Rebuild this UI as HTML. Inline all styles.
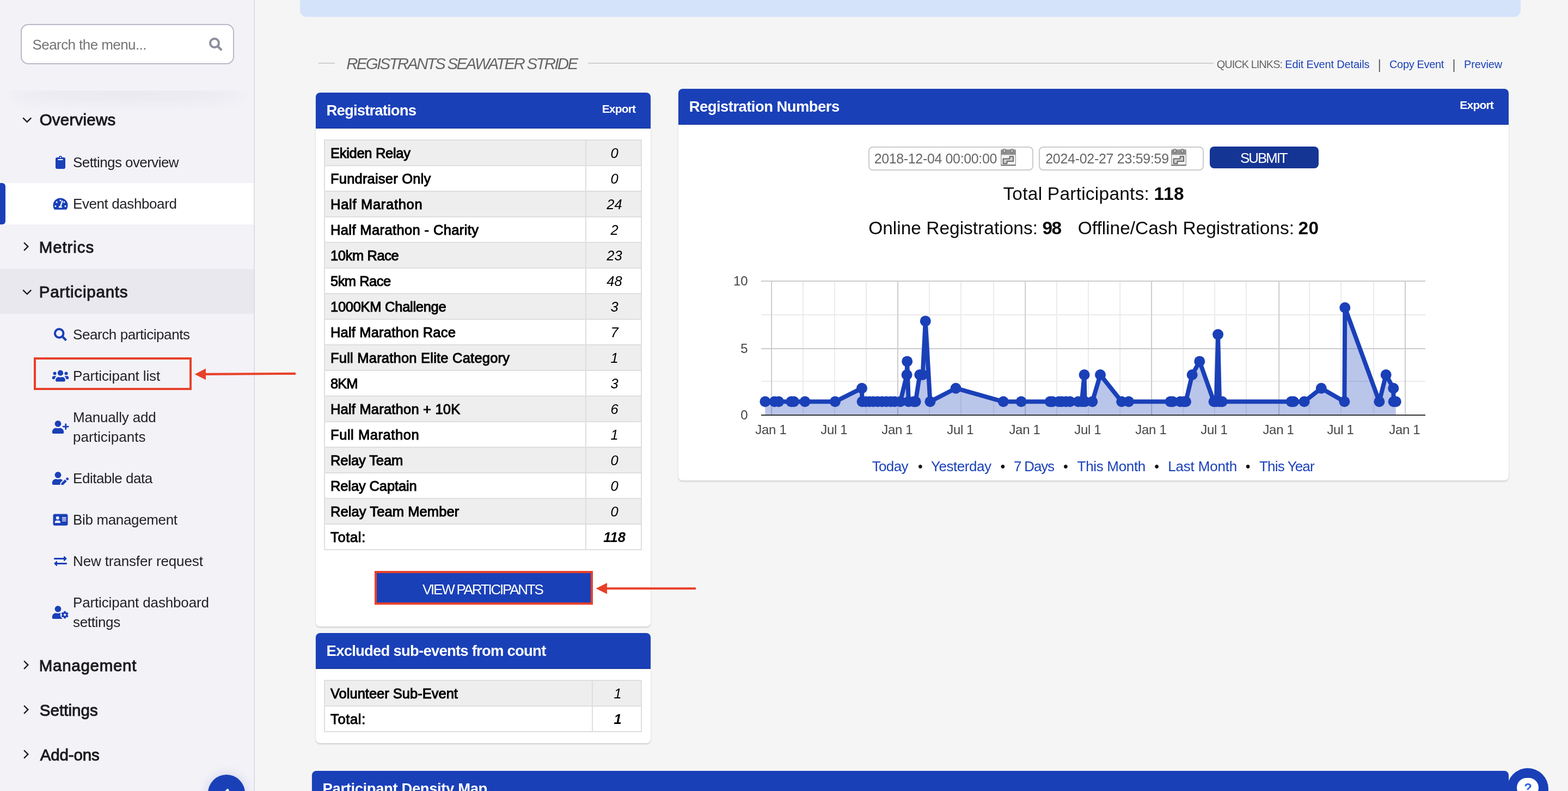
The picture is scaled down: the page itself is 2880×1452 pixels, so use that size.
<!DOCTYPE html>
<html lang="en">
<head>
<meta charset="utf-8">
<title>Event dashboard - Registrants Seawater Stride</title>
<style>
*{box-sizing:border-box;margin:0;padding:0}
html,body{width:2880px;height:1452px;overflow:hidden;background:#f5f5f5}
#page{position:absolute;left:0;top:0;width:2880px;height:1452px;overflow:hidden;will-change:transform}
body{position:relative;font-family:"Liberation Sans",Arial,sans-serif;color:#1c1c1e;-webkit-font-smoothing:antialiased}
@media (max-width:1500px){#page{zoom:.5}}
a{text-decoration:none;color:#1a40b8}
ul{list-style:none}

/* ---------- sidebar ---------- */
#sidebar{position:absolute;left:0;top:0;width:468px;height:1452px;background:#f3f2f7;border-right:2px solid #dddde6;overflow:hidden}
#searchwrap{position:absolute;left:0;top:0;width:466px;height:166px}
#searchwrap:after{content:"";position:absolute;left:8px;right:8px;top:136px;height:30px;box-shadow:0 22px 28px -8px rgba(60,60,90,.105);border-radius:50%}
#searchcover{position:absolute;left:0;top:0;width:466px;height:166px;background:#f3f2f7}
#search{position:absolute;left:38px;top:44px;width:392px;height:74px;background:#fff;border:2px solid #b9b8c9;border-radius:14px}
#search span{position:absolute;left:21px;top:18px;font-size:26px;line-height:36px;color:#757575;white-space:nowrap}
#search svg{position:absolute;left:343.500px;top:22.500px;width:26px;height:26px}
nav{position:absolute;left:0;top:178px;width:466px}
.sec{position:relative;height:82px}
.sec.open{background:#e9e8ee}
.sec b{position:absolute;left:71px;top:21px;font-size:29.500px;line-height:42px;font-weight:400;-webkit-text-stroke:1px #1c1c1e;color:#1c1c1e;white-space:nowrap}
.sec svg{position:absolute;left:37px;top:29px;width:24px;height:24px}
.it{position:relative;min-height:76px;padding:20px 20px 20px 134px;font-size:26px;line-height:36px;color:#222226;white-space:nowrap}
.it svg{position:absolute;left:95px;top:50%;margin-top:-14px;width:32px;height:28px;fill:#1a40b8}
.it.act{background:#fff}
.it.act:before{content:"";position:absolute;left:0;top:0;bottom:0;width:10px;background:#1a40b8;border-radius:0 6px 6px 0}
#collapse{position:absolute;left:382px;top:1422px;width:68px;height:68px;border-radius:50%;background:#1a40b8;box-shadow:0 0 18px 3px rgba(26,64,184,.13)}
#collapse svg{position:absolute;left:22px;top:18px;width:24px;height:24px}

/* ---------- annotations ---------- */
.redbox{position:absolute;border:4px solid #e8412a;pointer-events:none}
.arrow{position:absolute;overflow:visible}

/* ---------- main ---------- */
#banner{position:absolute;left:551px;top:-20px;width:2242px;height:50.500px;background:#d5e3fa;border-radius:0 0 12px 12px}
#heading{position:absolute;left:585px;top:96px;width:2186px;height:44px}
#heading .l1{position:absolute;left:0;top:19px;width:30px;height:2px;background:#cfcfcf}
#heading .l2{position:absolute;left:495px;top:19px;width:1149px;height:2px;background:#cfcfcf}
#heading h1{font-weight:400}
#quick i{position:absolute;top:11px;width:20px;text-align:center;font-style:normal;font-size:23px;line-height:24px;color:#555}

.card{position:absolute;background:#fff;border-radius:8px;box-shadow:0 2px 3px rgba(0,0,0,.16)}
.card .hd{position:absolute;left:0;top:0;right:0;height:66px;background:#1a40b8;border-radius:8px 8px 0 0;color:#fff;box-shadow:inset 0 -1px 0 rgba(0,0,0,.22)}
.card .hd h2{color:#fff}
.card .hd a{color:#fff}

table{position:absolute;border-collapse:collapse;table-layout:fixed;border:2px solid #d6d6d6}
td{height:47px;border:2px solid #dedede;font-size:25.500px;line-height:30px;font-weight:400;-webkit-text-stroke:1px #000;color:#000;padding:0 0 0 10px;white-space:nowrap;vertical-align:middle}
td.n{font-weight:400;font-style:italic;text-align:center;padding:0 0 0 3px;-webkit-text-stroke:0}
tr:nth-child(odd) td{background:#eee}
tr:nth-child(even) td{background:#fff}
tr.tot td.n{font-weight:700}

#viewbtn{position:absolute;left:108px;top:878px;width:401px;height:62px;background:#1a40b8;border:4px solid #e8412a;color:#fff}
#dates{position:absolute;left:0;top:106px;width:100%;height:46px}
.inp{position:absolute;top:0;width:303px;height:44px;border:2px solid #cbcbcb;border-radius:8px;background:#fff;color:#666}
.inp .cal{position:absolute;left:241px;top:2px;width:28px;height:32px}
#submit{position:absolute;left:976px;top:0;width:200px;height:40px;border-radius:8px;background:#153594;color:#fff}
#tot,#onl{color:#0a0a0a}
#ranges i{position:absolute;top:679px;width:20px;text-align:center;font-style:normal;font-size:25px;line-height:28px;color:#111}
#help{position:absolute;left:2768px;top:1410px;width:76px;height:76px;border-radius:50%;background:#1a40b8}
#help span{position:absolute;left:18px;top:18px;width:40px;height:36px;border-radius:18px;background:#fff}
</style>
</head>
<body>
<div id="page">
<aside id="sidebar">
  <div id="searchwrap"></div>
  <div id="searchcover"></div>
  <div id="search">
    <span style="left:19.5px;letter-spacing:-0.57px">Search the menu...</span>
    <svg viewBox="0 0 26 26"><circle cx="10" cy="10" r="8" fill="none" stroke="#8e8e9c" stroke-width="4"/><path d="M15.800 15.800 L23.200 23.200" stroke="#8e8e9c" stroke-width="4.400"/></svg>
  </div>
  <nav>
<div class="sec"><svg viewBox="0 0 24 24"><path d="M5.250 9.300 L12.750 16.800 L20.250 9.300" fill="none" stroke="#1c1c1e" stroke-width="2.400"/></svg><b style="left:72.7px;letter-spacing:0.23px">Overviews</b></div>
<ul>
<li class="it"><svg viewBox="0 0 32 28"><rect x="7" y="5" width="18" height="21" rx="3"/><circle cx="16" cy="5" r="3"/><circle cx="16" cy="5" r="1.2" fill="#f3f2f7"/><rect x="11.1" y="7.9" width="9.6" height="2" rx="1" fill="#f3f2f7"/></svg><span style="letter-spacing:-0.57px">Settings overview</span></li>
<li class="it act"><svg viewBox="0 0 32 28"><path d="M16 3.4 A13.5 13.5 0 0 1 29.5 16.9 C29.5 19.6 28.8 22 27.6 24 C27.3 24.5 26.8 24.8 26.2 24.8 L5.8 24.8 C5.2 24.8 4.7 24.5 4.4 24 C3.2 22 2.5 19.6 2.5 16.9 A13.5 13.5 0 0 1 16 3.4 Z"/><g fill="#fff"><circle cx="16" cy="8" r="1.5"/><circle cx="9.2" cy="11" r="1.5"/><circle cx="22.8" cy="11" r="1.5"/><circle cx="6.9" cy="18.5" r="1.5"/><circle cx="25" cy="18.5" r="1.5"/><path d="M18.6 8 L20.8 8.7 L17.6 18.4 A3.1 3.1 0 0 1 19.1 21.3 L12.9 21.3 A3.1 3.1 0 0 1 15.4 17.7 Z"/></g></svg><span style="letter-spacing:-0.41px">Event dashboard</span></li>
</ul>
<div class="sec"><svg viewBox="0 0 24 24"><path d="M7.050 4.250 L14.400 11.600 L7.050 18.950" fill="none" stroke="#1c1c1e" stroke-width="2.400"/></svg><b style="left:71.7px;letter-spacing:0.9px">Metrics</b></div>
<div class="sec open"><svg viewBox="0 0 24 24"><path d="M5.250 9.300 L12.750 16.800 L20.250 9.300" fill="none" stroke="#1c1c1e" stroke-width="2.400"/></svg><b style="left:71.7px;letter-spacing:0.8px">Participants</b></div>
<ul>
<li class="it"><svg viewBox="0 0 32 28"><circle cx="13.700" cy="11.900" r="7.800" fill="none" stroke="#1a40b8" stroke-width="4"/><path d="M19.400 17.600 L26.500 24.700" stroke="#1a40b8" stroke-width="4.300"/></svg><span style="letter-spacing:-0.42px">Search participants</span></li>
<li class="it"><svg viewBox="0 0 32 28"><g transform="translate(0 -2)"><circle cx="16" cy="10.7" r="5.1"/><path d="M7.1 24 C7.1 20.6 9.6 18.1 13 18.1 C14 18.6 15 18.8 16 18.8 C17 18.8 18 18.6 19 18.1 C22.4 18.1 24.9 20.6 24.9 24 C24.9 25.4 24 26.5 22.6 26.5 L9.4 26.5 C8 26.5 7.1 25.4 7.1 24 Z"/><circle cx="5.5" cy="11.4" r="3"/><circle cx="26.5" cy="11.4" r="3"/><path d="M3.6 16.2 L8.7 16.2 C7 17.6 5.8 19.6 5.5 21.9 L2.2 21.9 C1.4 21.9 0.8 21.3 0.8 20.5 L0.8 19 C0.8 17.4 2 16.2 3.6 16.2 Z"/><path d="M28.4 16.2 L23.3 16.2 C25 17.6 26.2 19.6 26.5 21.9 L29.8 21.9 C30.6 21.9 31.2 21.3 31.2 20.5 L31.2 19 C31.2 17.4 30 16.2 28.4 16.2 Z"/></g></svg><span style="letter-spacing:-0.11px">Participant list</span></li>
<li class="it"><svg viewBox="0 0 32 28"><circle cx="11.5" cy="7.9" r="5.9"/><path d="M0.8 23 C0.8 18.8 3.9 15.5 8 15.4 C9.1 15.9 10.3 16.2 11.5 16.2 C12.7 16.2 13.9 15.9 15 15.4 C19.1 15.5 22.2 18.8 22.2 23 L22.2 23.8 C22.2 25.1 21.2 26.1 19.9 26.1 L3.1 26.1 C1.8 26.1 0.8 25.1 0.8 23.8 Z"/><path d="M25.75 8.6 V17.600 M21.200 13.100 H30.300" stroke="#1a40b8" stroke-width="2.900" stroke-linecap="round" fill="none"/></svg><span style="letter-spacing:-0.18px">Manually add</span><br><span style="letter-spacing:0.05px">participants</span></li>
<li class="it"><svg viewBox="0 0 32 28"><circle cx="11.500" cy="7.900" r="5.900"/><path d="M0.800 22.600 C0.800 18.400 3.900 15.400 8 15.300 C9.100 15.800 10.300 16.100 11.500 16.100 C12.700 16.100 13.900 15.800 15 15.300 C17 15.300 18.900 16.200 20.200 17.600 L16.400 21.400 C15.700 22.100 15.400 23 15.500 24 L15.700 26 L3.100 26 C1.800 26 0.800 25 0.800 23.700 Z"/><path d="M24.400 16.200 L27.700 19.500 L21.400 25.700 C21 26 20.600 26.100 20.200 26.100 L17.300 26.100 L17.500 23.400 C17.500 23 17.700 22.700 18 22.400 Z"/><path d="M25.700 14.900 L28.100 12.500 C28.400 12.200 28.800 12.200 29.100 12.500 L31.300 14.700 C31.600 15 31.600 15.400 31.300 15.700 L28.900 18.100 Z"/></svg><span style="letter-spacing:-0.46px">Editable data</span></li>
<li class="it"><svg viewBox="0 0 32 28"><rect x="2.5" y="3.4" width="27" height="21.4" rx="3.2"/><g fill="#f3f2f7"><circle cx="10.8" cy="10.8" r="3"/><path d="M5.6 19 C5.6 17 7.1 15.5 9 15.5 L12.6 15.5 C14.5 15.5 16 17 16 19 C16 19.6 15.6 20 15 20 L6.6 20 C6 20 5.6 19.6 5.6 19 Z"/><rect x="19" y="9.6" width="7.6" height="1.6" rx=".5"/><rect x="19" y="12.5" width="7.6" height="1.6" rx=".5"/><rect x="19" y="15.4" width="7.6" height="1.6" rx=".5"/></g></svg><span style="letter-spacing:-0.35px">Bib management</span></li>
<li class="it"><svg viewBox="0 0 32 28"><path d="M5.4 9.4 H23" stroke="#1a40b8" stroke-width="3" stroke-linecap="round" fill="none"/><path d="M22 5.9 C22 5 23.1 4.600 23.700 5.200 L27.900 9.400 L23.700 13.600 C23.100 14.200 22 13.800 22 12.900 Z"/><path d="M26.600 18.500 H9" stroke="#1a40b8" stroke-width="3" stroke-linecap="round" fill="none"/><path d="M10 15 C10 14.100 8.900 13.700 8.300 14.300 L4.100 18.500 L8.300 22.700 C8.900 23.300 10 22.900 10 22 Z"/></svg><span style="letter-spacing:-0.13px">New transfer request</span></li>
<li class="it"><svg viewBox="0 0 32 28"><circle cx="11.500" cy="7.800" r="5.900"/><path d="M0.800 22.600 C0.800 18.400 3.900 15.400 8 15.300 C9.100 15.800 10.300 16.100 11.500 16.100 C12.700 16.100 13.900 15.800 15 15.300 L16.500 15.400 C15.600 17.300 15.500 19.400 16.200 21.300 C16.900 23.300 18.400 25 20.500 26 L3.100 26 C1.800 26 0.800 25 0.800 23.700 Z"/><g transform="translate(24.100 18.600)"><path d="M1.53 -4.44 L1.46 -6.33 L-1.46 -6.33 L-1.53 -4.44 L-3.08 -3.55 L-4.75 -4.43 L-6.22 -1.90 L-4.61 -0.90 L-4.61 0.90 L-6.22 1.90 L-4.75 4.43 L-3.08 3.55 L-1.53 4.44 L-1.46 6.33 L1.46 6.33 L1.53 4.44 L3.08 3.55 L4.75 4.43 L6.22 1.90 L4.61 0.90 L4.61 -0.90 L6.22 -1.90 L4.75 -4.43 L3.08 -3.55 Z" stroke="#1a40b8" stroke-width=".800" stroke-linejoin="round"/><circle r="5"/><circle r="2.100" fill="#f3f2f7"/></g></svg><span style="letter-spacing:-0.15px">Participant dashboard</span><br><span style="letter-spacing:-0.34px">settings</span></li>
</ul>
<div class="sec"><svg viewBox="0 0 24 24"><path d="M7.050 4.250 L14.400 11.600 L7.050 18.950" fill="none" stroke="#1c1c1e" stroke-width="2.400"/></svg><b style="left:71.7px;letter-spacing:0.73px">Management</b></div>
<div class="sec"><svg viewBox="0 0 24 24"><path d="M7.050 4.250 L14.400 11.600 L7.050 18.950" fill="none" stroke="#1c1c1e" stroke-width="2.400"/></svg><b style="left:72.7px;letter-spacing:0.06px">Settings</b></div>
<div class="sec"><svg viewBox="0 0 24 24"><path d="M7.050 4.250 L14.400 11.600 L7.050 18.950" fill="none" stroke="#1c1c1e" stroke-width="2.400"/></svg><b style="left:73.7px;letter-spacing:-0.15px">Add-ons</b></div>
  </nav>
  <div id="collapse"><svg viewBox="0 0 24 24"><path d="M15.500 9 L8 16.500 L15.500 24" fill="none" stroke="#fff" stroke-width="4.500"/></svg></div>
</aside>
<div class="redbox" style="left:62px;top:656px;width:290px;height:60px"></div>
<svg class="arrow" style="left:356px;top:670px" width="190" height="34" viewBox="0 0 190 34"><path d="M21 16.800 L187 15.800" stroke="#e8412a" stroke-width="4.200" fill="none"/><path d="M1.600 16.900 L22 6.600 L22 27.300 Z" fill="#e8412a"/></svg>

<main>
<div id="banner"></div>
<div id="heading">
  <span class="l1"></span>
  <h1 style="position:absolute;white-space:pre;left:51.2px;top:6.0px;font-size:29.5px;line-height:29.5px;letter-spacing:-2.72px;font-style:italic;color:#666">REGISTRANTS SEAWATER STRIDE</h1>
  <span class="l2"></span>
  <div id="quick">
  <span style="position:absolute;white-space:pre;left:1649.7px;top:11.8px;font-size:20px;line-height:20px;letter-spacing:-0.99px;color:#666">QUICK LINKS:</span>
  <a style="position:absolute;white-space:pre;left:1775.3px;top:11.8px;font-size:20px;line-height:20px;letter-spacing:-0.16px">Edit Event Details</a>
  <i style="left:1938.7px">|</i>
  <a style="position:absolute;white-space:pre;left:1967.0px;top:11.8px;font-size:20px;line-height:20px;letter-spacing:-0.33px">Copy Event</a>
  <i style="left:2075.4px">|</i>
  <a style="position:absolute;white-space:pre;left:2104.0px;top:11.8px;font-size:20px;line-height:20px;letter-spacing:-0.15px">Preview</a>
  </div>
</div>

<section class="card" id="reg" style="left:580px;top:170px;width:615px;height:980px">
  <div class="hd"><h2 style="position:absolute;white-space:pre;left:19.6px;top:19.3px;font-size:27.5px;line-height:27.5px;letter-spacing:-0.86px;font-weight:700">Registrations</h2><a style="position:absolute;white-space:pre;left:525.7px;top:19.0px;font-size:21px;line-height:21px;letter-spacing:-0.82px;font-weight:700">Export</a></div>
  <table style="left:15px;top:86px"><colgroup><col style="width:480px"><col style="width:102px"></colgroup><tbody>
<tr><td style="letter-spacing:-0.3px">Ekiden Relay</td><td class="n">0</td></tr>
<tr><td style="letter-spacing:0.2px">Fundraiser Only</td><td class="n">0</td></tr>
<tr><td style="letter-spacing:0.71px">Half Marathon</td><td class="n">24</td></tr>
<tr><td style="letter-spacing:0.38px">Half Marathon - Charity</td><td class="n">2</td></tr>
<tr><td style="letter-spacing:-0.4px">10km Race</td><td class="n">23</td></tr>
<tr><td style="letter-spacing:-0.53px">5km Race</td><td class="n">48</td></tr>
<tr><td style="letter-spacing:-0.28px">1000KM Challenge</td><td class="n">3</td></tr>
<tr><td style="letter-spacing:0.18px">Half Marathon Race</td><td class="n">7</td></tr>
<tr><td style="letter-spacing:0.22px">Full Marathon Elite Category</td><td class="n">1</td></tr>
<tr><td style="letter-spacing:-0.95px">8KM</td><td class="n">3</td></tr>
<tr><td style="letter-spacing:0.2px">Half Marathon + 10K</td><td class="n">6</td></tr>
<tr><td style="letter-spacing:0.56px">Full Marathon</td><td class="n">1</td></tr>
<tr><td style="letter-spacing:-0.1px">Relay Team</td><td class="n">0</td></tr>
<tr><td style="letter-spacing:-0.12px">Relay Captain</td><td class="n">0</td></tr>
<tr><td style="letter-spacing:0.09px">Relay Team Member</td><td class="n">0</td></tr>
<tr class="tot"><td style="letter-spacing:0.66px">Total:</td><td class="n">118</td></tr>
</tbody></table>

  <a id="viewbtn"><span style="position:absolute;white-space:pre;left:84.0px;top:17.4px;font-size:26px;line-height:26px;letter-spacing:-2.24px">VIEW PARTICIPANTS</span></a>
</section>
<svg class="arrow" style="left:1092px;top:1062px" width="190" height="34" viewBox="0 0 190 34"><path d="M22 18.200 L186 18.200" stroke="#e8412a" stroke-width="4" fill="none"/><path d="M2.500 18.200 L23 8 L23 28.400 Z" fill="#e8412a"/></svg>

<section class="card" id="excl" style="left:580px;top:1162px;width:615px;height:202px">
  <div class="hd"><h2 style="position:absolute;white-space:pre;left:19.6px;top:19.3px;font-size:27.5px;line-height:27.5px;letter-spacing:-0.78px;font-weight:700">Excluded sub-events from count</h2></div>
  <table style="left:15px;top:86px"><colgroup><col style="width:492px"><col style="width:90px"></colgroup><tbody>
<tr><td style="letter-spacing:0.0px">Volunteer Sub-Event</td><td class="n">1</td></tr>
<tr class="tot"><td style="letter-spacing:0.66px">Total:</td><td class="n">1</td></tr>
</tbody></table>

</section>

<section class="card" id="nums" style="left:1246px;top:163px;width:1525px;height:719px">
  <div class="hd"><h2 style="position:absolute;white-space:pre;left:19.8px;top:19.3px;font-size:27.5px;line-height:27.5px;letter-spacing:-0.57px;font-weight:700">Registration Numbers</h2><a style="position:absolute;white-space:pre;left:1435.3px;top:19.2px;font-size:21px;line-height:21px;letter-spacing:-0.8px;font-weight:700">Export</a></div>
  <div id="dates">
    <span class="inp" style="left:349px"><span style="position:absolute;white-space:pre;left:8.7px;top:7.7px;font-size:25px;line-height:25px;letter-spacing:-0.36px">2018-12-04 00:00:00</span><svg class="cal" viewBox="0 0 28 32"><use href="#calico"/></svg></span>
    <span class="inp" style="left:662px"><span style="position:absolute;white-space:pre;left:10.2px;top:7.7px;font-size:25px;line-height:25px;letter-spacing:-0.29px">2024-02-27 23:59:59</span><svg class="cal" viewBox="0 0 28 32"><use href="#calico"/></svg></span>
    <span id="submit"><span style="position:absolute;white-space:pre;left:56.0px;top:7.9px;font-size:26px;line-height:26px;letter-spacing:-2.12px">SUBMIT</span></span>
  </div>
  <p id="tot"><span style="position:absolute;white-space:pre;left:596.4px;top:175.9px;font-size:33.5px;line-height:33.5px;letter-spacing:0.23px">Total Participants:</span><b style="position:absolute;white-space:pre;left:873.5px;top:175.9px;font-size:33.5px;line-height:33.5px;letter-spacing:0.6px;font-weight:700">118</b></p>
  <p id="onl"><span style="position:absolute;white-space:pre;left:349.2px;top:239.3px;font-size:33.5px;line-height:33.5px;letter-spacing:-0.01px">Online Registrations:</span><b style="position:absolute;white-space:pre;left:668.6px;top:239.3px;font-size:33.5px;line-height:33.5px;letter-spacing:-1.8px;font-weight:700">98</b><span style="position:absolute;white-space:pre;left:733.7px;top:239.3px;font-size:33.5px;line-height:33.5px;letter-spacing:-0.02px">Offline/Cash Registrations:</span><b style="position:absolute;white-space:pre;left:1138.6px;top:239.3px;font-size:33.5px;line-height:33.5px;letter-spacing:0.2px;font-weight:700">20</b></p>
  <svg id="chart" width="1525" height="653" viewBox="1246 229 1525 653" style="position:absolute;left:0;top:66px" font-family="Liberation Sans, Arial, sans-serif">
<rect x="1474.0" y="515.0" width="2" height="247.0" fill="#ebebeb"/><rect x="1532.0" y="515.0" width="2" height="247.0" fill="#ebebeb"/><rect x="1590.0" y="515.0" width="2" height="247.0" fill="#ebebeb"/><rect x="1706.0" y="515.0" width="2" height="247.0" fill="#ebebeb"/><rect x="1764.0" y="515.0" width="2" height="247.0" fill="#ebebeb"/><rect x="1824.0" y="515.0" width="2" height="247.0" fill="#ebebeb"/><rect x="1940.0" y="515.0" width="2" height="247.0" fill="#ebebeb"/><rect x="1998.0" y="515.0" width="2" height="247.0" fill="#ebebeb"/><rect x="2056.2" y="515.0" width="2" height="247.0" fill="#ebebeb"/><rect x="2172.3" y="515.0" width="2" height="247.0" fill="#ebebeb"/><rect x="2230.1" y="515.0" width="2" height="247.0" fill="#ebebeb"/><rect x="2288.0" y="515.0" width="2" height="247.0" fill="#ebebeb"/><rect x="2404.2" y="515.0" width="2" height="247.0" fill="#ebebeb"/><rect x="2462.2" y="515.0" width="2" height="247.0" fill="#ebebeb"/><rect x="2522.1" y="515.0" width="2" height="247.0" fill="#ebebeb"/><rect x="1398" y="699" width="1220" height="2" fill="#ebebeb"/><rect x="1398" y="577" width="1220" height="2" fill="#ebebeb"/><rect x="1416.1" y="515.0" width="2" height="247.0" fill="#cccccc"/><rect x="1648.0" y="515.0" width="2" height="247.0" fill="#cccccc"/><rect x="1882.2" y="515.0" width="2" height="247.0" fill="#cccccc"/><rect x="2114.1" y="515.0" width="2" height="247.0" fill="#cccccc"/><rect x="2348.2" y="515.0" width="2" height="247.0" fill="#cccccc"/><rect x="2580.0" y="515.0" width="2" height="247.0" fill="#cccccc"/><rect x="1398" y="639" width="1220" height="2" fill="#cccccc"/><rect x="1398" y="515" width="1220" height="2" fill="#cccccc"/>
<path d="M1405.4 762.0 L1405.4 737.3 L1422.5 737.3 L1430.2 737.3 L1453.3 737.3 L1458.0 737.3 L1478.5 737.3 L1533.9 737.3 L1583.0 712.7 L1583.6 737.3 L1590.0 737.3 L1597.0 737.3 L1604.0 737.3 L1612.0 737.3 L1620.0 737.3 L1628.0 737.3 L1636.0 737.3 L1643.0 737.3 L1653.7 737.3 L1665.6 688.0 L1666.2 663.4 L1668.8 737.3 L1678.5 737.3 L1681.7 737.3 L1689.3 688.0 L1694.7 688.0 L1699.8 589.4 L1708.4 737.3 L1755.6 712.7 L1842.9 737.3 L1875.7 737.3 L1928.7 737.3 L1933.0 737.3 L1944.9 737.3 L1950.3 737.3 L1957.8 737.3 L1965.3 737.3 L1980.4 737.3 L1986.9 737.3 L1991.6 688.0 L1992.6 737.3 L2006.3 737.3 L2021.0 688.0 L2060.2 737.3 L2073.1 737.3 L2149.6 737.3 L2153.9 737.3 L2167.9 737.3 L2174.4 737.3 L2178.0 737.3 L2189.7 688.0 L2203.3 663.4 L2229.6 737.3 L2233.9 737.3 L2237.1 614.0 L2240.0 737.3 L2244.7 737.3 L2371.8 737.3 L2376.0 737.3 L2395.5 737.3 L2426.8 712.7 L2469.4 737.3 L2470.3 564.7 L2533.4 737.3 L2545.7 688.0 L2559.3 712.7 L2559.7 737.3 L2563.8 737.3 L2563.8 762.0 Z" fill="#1a40b8" fill-opacity=".3"/>
<rect x="1398" y="761" width="1220" height="2" fill="#333"/>
<path d="M1405.4 737.3 L1422.5 737.3 L1430.2 737.3 L1453.3 737.3 L1458.0 737.3 L1478.5 737.3 L1533.9 737.3 L1583.0 712.7 L1583.6 737.3 L1590.0 737.3 L1597.0 737.3 L1604.0 737.3 L1612.0 737.3 L1620.0 737.3 L1628.0 737.3 L1636.0 737.3 L1643.0 737.3 L1653.7 737.3 L1665.6 688.0 L1666.2 663.4 L1668.8 737.3 L1678.5 737.3 L1681.7 737.3 L1689.3 688.0 L1694.7 688.0 L1699.8 589.4 L1708.4 737.3 L1755.6 712.7 L1842.9 737.3 L1875.7 737.3 L1928.7 737.3 L1933.0 737.3 L1944.9 737.3 L1950.3 737.3 L1957.8 737.3 L1965.3 737.3 L1980.4 737.3 L1986.9 737.3 L1991.6 688.0 L1992.6 737.3 L2006.3 737.3 L2021.0 688.0 L2060.2 737.3 L2073.1 737.3 L2149.6 737.3 L2153.9 737.3 L2167.9 737.3 L2174.4 737.3 L2178.0 737.3 L2189.7 688.0 L2203.3 663.4 L2229.6 737.3 L2233.9 737.3 L2237.1 614.0 L2240.0 737.3 L2244.7 737.3 L2371.8 737.3 L2376.0 737.3 L2395.5 737.3 L2426.8 712.7 L2469.4 737.3 L2470.3 564.7 L2533.4 737.3 L2545.7 688.0 L2559.3 712.7 L2559.7 737.3 L2563.8 737.3" fill="none" stroke="#1a40b8" stroke-width="8" stroke-linejoin="round"/>
<g fill="#1a40b8"><circle cx="1405.4" cy="737.3" r="10"/><circle cx="1422.5" cy="737.3" r="10"/><circle cx="1430.2" cy="737.3" r="10"/><circle cx="1453.3" cy="737.3" r="10"/><circle cx="1458.0" cy="737.3" r="10"/><circle cx="1478.5" cy="737.3" r="10"/><circle cx="1533.9" cy="737.3" r="10"/><circle cx="1583.0" cy="712.7" r="10"/><circle cx="1583.6" cy="737.3" r="10"/><circle cx="1590.0" cy="737.3" r="10"/><circle cx="1597.0" cy="737.3" r="10"/><circle cx="1604.0" cy="737.3" r="10"/><circle cx="1612.0" cy="737.3" r="10"/><circle cx="1620.0" cy="737.3" r="10"/><circle cx="1628.0" cy="737.3" r="10"/><circle cx="1636.0" cy="737.3" r="10"/><circle cx="1643.0" cy="737.3" r="10"/><circle cx="1653.7" cy="737.3" r="10"/><circle cx="1665.6" cy="688.0" r="10"/><circle cx="1666.2" cy="663.4" r="10"/><circle cx="1668.8" cy="737.3" r="10"/><circle cx="1678.5" cy="737.3" r="10"/><circle cx="1681.7" cy="737.3" r="10"/><circle cx="1689.3" cy="688.0" r="10"/><circle cx="1694.7" cy="688.0" r="10"/><circle cx="1699.8" cy="589.4" r="10"/><circle cx="1708.4" cy="737.3" r="10"/><circle cx="1755.6" cy="712.7" r="10"/><circle cx="1842.9" cy="737.3" r="10"/><circle cx="1875.7" cy="737.3" r="10"/><circle cx="1928.7" cy="737.3" r="10"/><circle cx="1933.0" cy="737.3" r="10"/><circle cx="1944.9" cy="737.3" r="10"/><circle cx="1950.3" cy="737.3" r="10"/><circle cx="1957.8" cy="737.3" r="10"/><circle cx="1965.3" cy="737.3" r="10"/><circle cx="1980.4" cy="737.3" r="10"/><circle cx="1986.9" cy="737.3" r="10"/><circle cx="1991.6" cy="688.0" r="10"/><circle cx="1992.6" cy="737.3" r="10"/><circle cx="2006.3" cy="737.3" r="10"/><circle cx="2021.0" cy="688.0" r="10"/><circle cx="2060.2" cy="737.3" r="10"/><circle cx="2073.1" cy="737.3" r="10"/><circle cx="2149.6" cy="737.3" r="10"/><circle cx="2153.9" cy="737.3" r="10"/><circle cx="2167.9" cy="737.3" r="10"/><circle cx="2174.4" cy="737.3" r="10"/><circle cx="2178.0" cy="737.3" r="10"/><circle cx="2189.7" cy="688.0" r="10"/><circle cx="2203.3" cy="663.4" r="10"/><circle cx="2229.6" cy="737.3" r="10"/><circle cx="2233.9" cy="737.3" r="10"/><circle cx="2237.1" cy="614.0" r="10"/><circle cx="2240.0" cy="737.3" r="10"/><circle cx="2244.7" cy="737.3" r="10"/><circle cx="2371.8" cy="737.3" r="10"/><circle cx="2376.0" cy="737.3" r="10"/><circle cx="2395.5" cy="737.3" r="10"/><circle cx="2426.8" cy="712.7" r="10"/><circle cx="2469.4" cy="737.3" r="10"/><circle cx="2470.3" cy="564.7" r="10"/><circle cx="2533.4" cy="737.3" r="10"/><circle cx="2545.7" cy="688.0" r="10"/><circle cx="2559.3" cy="712.7" r="10"/><circle cx="2559.7" cy="737.3" r="10"/><circle cx="2563.8" cy="737.3" r="10"/></g>
<g font-size="24" fill="#444"><text x="1373.600" y="770.4" text-anchor="end">0</text><text x="1373.600" y="648.4" text-anchor="end">5</text><text x="1373.600" y="524.4" text-anchor="end">10</text><text x="1415.9" y="797" text-anchor="middle" letter-spacing="-.3">Jan 1</text><text x="1531.8" y="797" text-anchor="middle" letter-spacing="-.3">Jul 1</text><text x="1647.8" y="797" text-anchor="middle" letter-spacing="-.3">Jan 1</text><text x="1763.8" y="797" text-anchor="middle" letter-spacing="-.3">Jul 1</text><text x="1882.0" y="797" text-anchor="middle" letter-spacing="-.3">Jan 1</text><text x="1997.8" y="797" text-anchor="middle" letter-spacing="-.3">Jul 1</text><text x="2113.9" y="797" text-anchor="middle" letter-spacing="-.3">Jan 1</text><text x="2229.9" y="797" text-anchor="middle" letter-spacing="-.3">Jul 1</text><text x="2348.0" y="797" text-anchor="middle" letter-spacing="-.3">Jan 1</text><text x="2462.0" y="797" text-anchor="middle" letter-spacing="-.3">Jul 1</text><text x="2579.8" y="797" text-anchor="middle" letter-spacing="-.3">Jan 1</text></g>
</svg>

  <p id="ranges">
  <a style="position:absolute;white-space:pre;left:355.7px;top:679.7px;font-size:26px;line-height:26px;letter-spacing:-0.65px">Today</a><a style="position:absolute;white-space:pre;left:464.0px;top:679.7px;font-size:26px;line-height:26px;letter-spacing:-0.47px">Yesterday</a><a style="position:absolute;white-space:pre;left:616.1px;top:679.7px;font-size:26px;line-height:26px;letter-spacing:-1.22px">7 Days</a><a style="position:absolute;white-space:pre;left:732.6px;top:679.7px;font-size:26px;line-height:26px;letter-spacing:-0.32px">This Month</a><a style="position:absolute;white-space:pre;left:899.2px;top:679.7px;font-size:26px;line-height:26px;letter-spacing:-0.17px">Last Month</a><a style="position:absolute;white-space:pre;left:1067.1px;top:679.7px;font-size:26px;line-height:26px;letter-spacing:-0.86px">This Year</a>
  <i style="left:434.3px">•</i><i style="left:585.9px">•</i><i style="left:701.4px">•</i><i style="left:868.7px">•</i><i style="left:1036.2px">•</i>
  </p>
</section>

<section class="card" id="map" style="left:573px;top:1415px;width:2198px;height:200px">
  <div class="hd"><h2 style="position:absolute;white-space:pre;left:19.6px;top:19.3px;font-size:27.5px;line-height:27.5px;letter-spacing:-0.41px;font-weight:700">Participant Density Map</h2></div>
</section>
<div id="help"><span></span><b style="position:absolute;white-space:pre;left:31.2px;top:24.5px;font-size:24px;line-height:24px;letter-spacing:-0.4px;font-weight:700;color:#2d63e2">?</b></div>
</main>
<svg width="0" height="0" style="position:absolute"><defs>
<g id="calico">
<rect x=".700" y="2" width="26.800" height="28.600" rx="1.500" fill="#f3f3f3" stroke="#9c9c9c" stroke-width="1.400"/>
<path d="M.700 3.500 a1.500 1.500 0 0 1 1.500 -1.500 h23.800 a1.500 1.500 0 0 1 1.500 1.500 v7.800 h-26.800z" fill="#8f8f8f"/>
<rect x=".300" y="29.300" width="27.600" height="2" rx=".800" fill="#6c6c6c"/>
<rect x="4.900" y=".500" width="4" height="7" rx="2" fill="#cfcfcf" stroke="#6f6f6f" stroke-width="1.400"/>
<rect x="18.800" y=".500" width="4" height="7" rx="2" fill="#cfcfcf" stroke="#6f6f6f" stroke-width="1.400"/>
<path d="M16.600 14.300 H23.100 V23.100 H11.500 V27.300 H4.600 V18.500 H16.600 Z" fill="#d2d2d2" stroke="#666" stroke-width="2" stroke-linejoin="round"/>
</g></defs></svg>
</div>
</body>
</html>
